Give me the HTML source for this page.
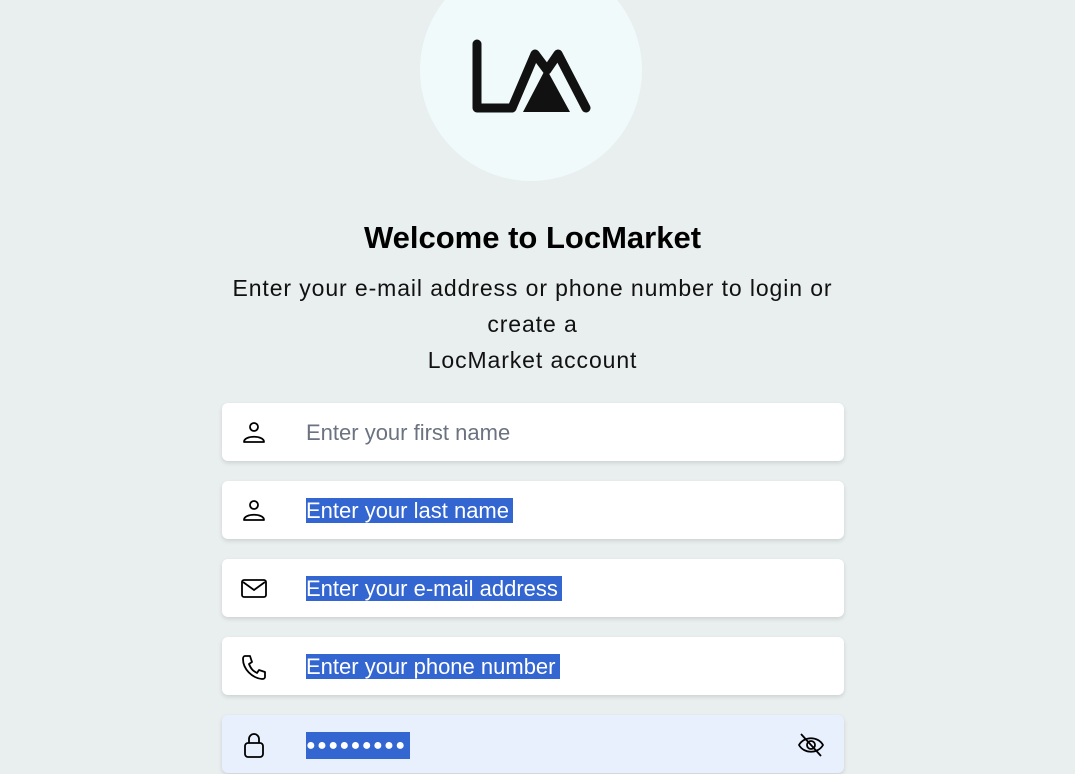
<!DOCTYPE html>
<html><head><style>
html,body{margin:0;padding:0}
body{width:1075px;height:774px;overflow:hidden;background:#e9eeee;font-family:"Liberation Sans",sans-serif;position:relative}
.circle{position:absolute;left:420px;top:-41px;width:222px;height:222px;border-radius:50%;background:#f0fafb}
h1{position:absolute;top:218px;left:0;width:1065px;text-align:center;margin:0;font-size:31px;font-weight:bold;color:#000;line-height:40px}
.sub{position:absolute;top:270px;left:0;width:1065px;text-align:center;font-size:23px;letter-spacing:0.9px;line-height:36px;color:#111;white-space:nowrap}
.inp{position:absolute;left:222px;width:622px;height:58px;background:#fff;border-radius:6px;box-shadow:0 2px 4px rgba(0,0,0,0.12)}
.inp.pw{background:#e8f0fd}
.ic{position:absolute;left:18px;top:16px;width:28px;height:28px}
.t{position:absolute;left:84px;top:17px;font-size:22px;line-height:25px;color:#6b7280}
.sel{background:#3366d0;color:#fff;padding-right:4px}
</style></head><body>
<div class="circle"></div>
<svg style="position:absolute;left:420px;top:0" width="225" height="180" viewBox="0 0 225 180">
<path d="M57 44 V108 H92" fill="none" stroke="#111" stroke-width="9" stroke-linecap="round" stroke-linejoin="round"/>
<path d="M92 108 L115 54 L127 70 L138 54 L166 108" fill="none" stroke="#111" stroke-width="9" stroke-linecap="round" stroke-linejoin="round"/>
<path d="M103 112 L126 68 L150 112 Z" fill="#111"/>
</svg>
<h1>Welcome to LocMarket</h1>
<div class="sub">Enter your e-mail address or phone number to login or<br>create a<br>LocMarket account</div>

<div class="inp" style="top:403px">
<svg class="ic" viewBox="0 0 28 28" fill="none" stroke="#000" stroke-width="1.8"><circle cx="14" cy="8" r="4"/><path d="M4 23 C4 16 24 16 24 23 Z" stroke-linejoin="round"/></svg>
<div class="t">Enter your first name</div></div>

<div class="inp" style="top:481px">
<svg class="ic" viewBox="0 0 28 28" fill="none" stroke="#000" stroke-width="1.8"><circle cx="14" cy="8" r="4"/><path d="M4 23 C4 16 24 16 24 23 Z" stroke-linejoin="round"/></svg>
<div class="t"><span class="sel">Enter your last name</span></div></div>

<div class="inp" style="top:559px">
<svg class="ic" viewBox="0 0 28 28" fill="none" stroke="#000" stroke-width="1.8"><rect x="2" y="5" width="24" height="17" rx="2"/><path d="M3 7 L14 15 L25 7"/></svg>
<div class="t"><span class="sel">Enter your e-mail address</span></div></div>

<div class="inp" style="top:637px">
<svg class="ic" viewBox="0 0 28 28" fill="none" stroke="#000" stroke-width="1.8" stroke-linejoin="round"><path d="M5 3 L10 3 L12 9 L9 11 C11 16 13 18 17 20 L19 17 L25 19 L25 24 C25 25 24 26 22 26 C12 25 3 16 3 6 C3 4 4 3 5 3 Z"/></svg>
<div class="t"><span class="sel">Enter your phone number</span></div></div>

<div class="inp pw" style="top:715px">
<svg class="ic" viewBox="0 0 28 28" fill="none" stroke="#000" stroke-width="1.8"><rect x="5" y="12" width="18" height="14" rx="3"/><path d="M9 12 V8 A5 5 0 0 1 19 8 V12"/></svg>
<div class="t" style="font-size:16px;letter-spacing:1.5px;top:18px"><span class="sel" style="padding:5px 4px 5px 0">●●●●●●●●●</span></div>
<svg style="position:absolute;left:575px;top:16px" width="28" height="28" viewBox="0 0 28 28" fill="none" stroke="#000" stroke-width="1.8"><path d="M2 14 C7 5 21 5 26 14 C21 23 7 23 2 14 Z"/><circle cx="14" cy="14" r="4"/><path d="M4 3 L24 25"/></svg>
</div>
</body></html>
